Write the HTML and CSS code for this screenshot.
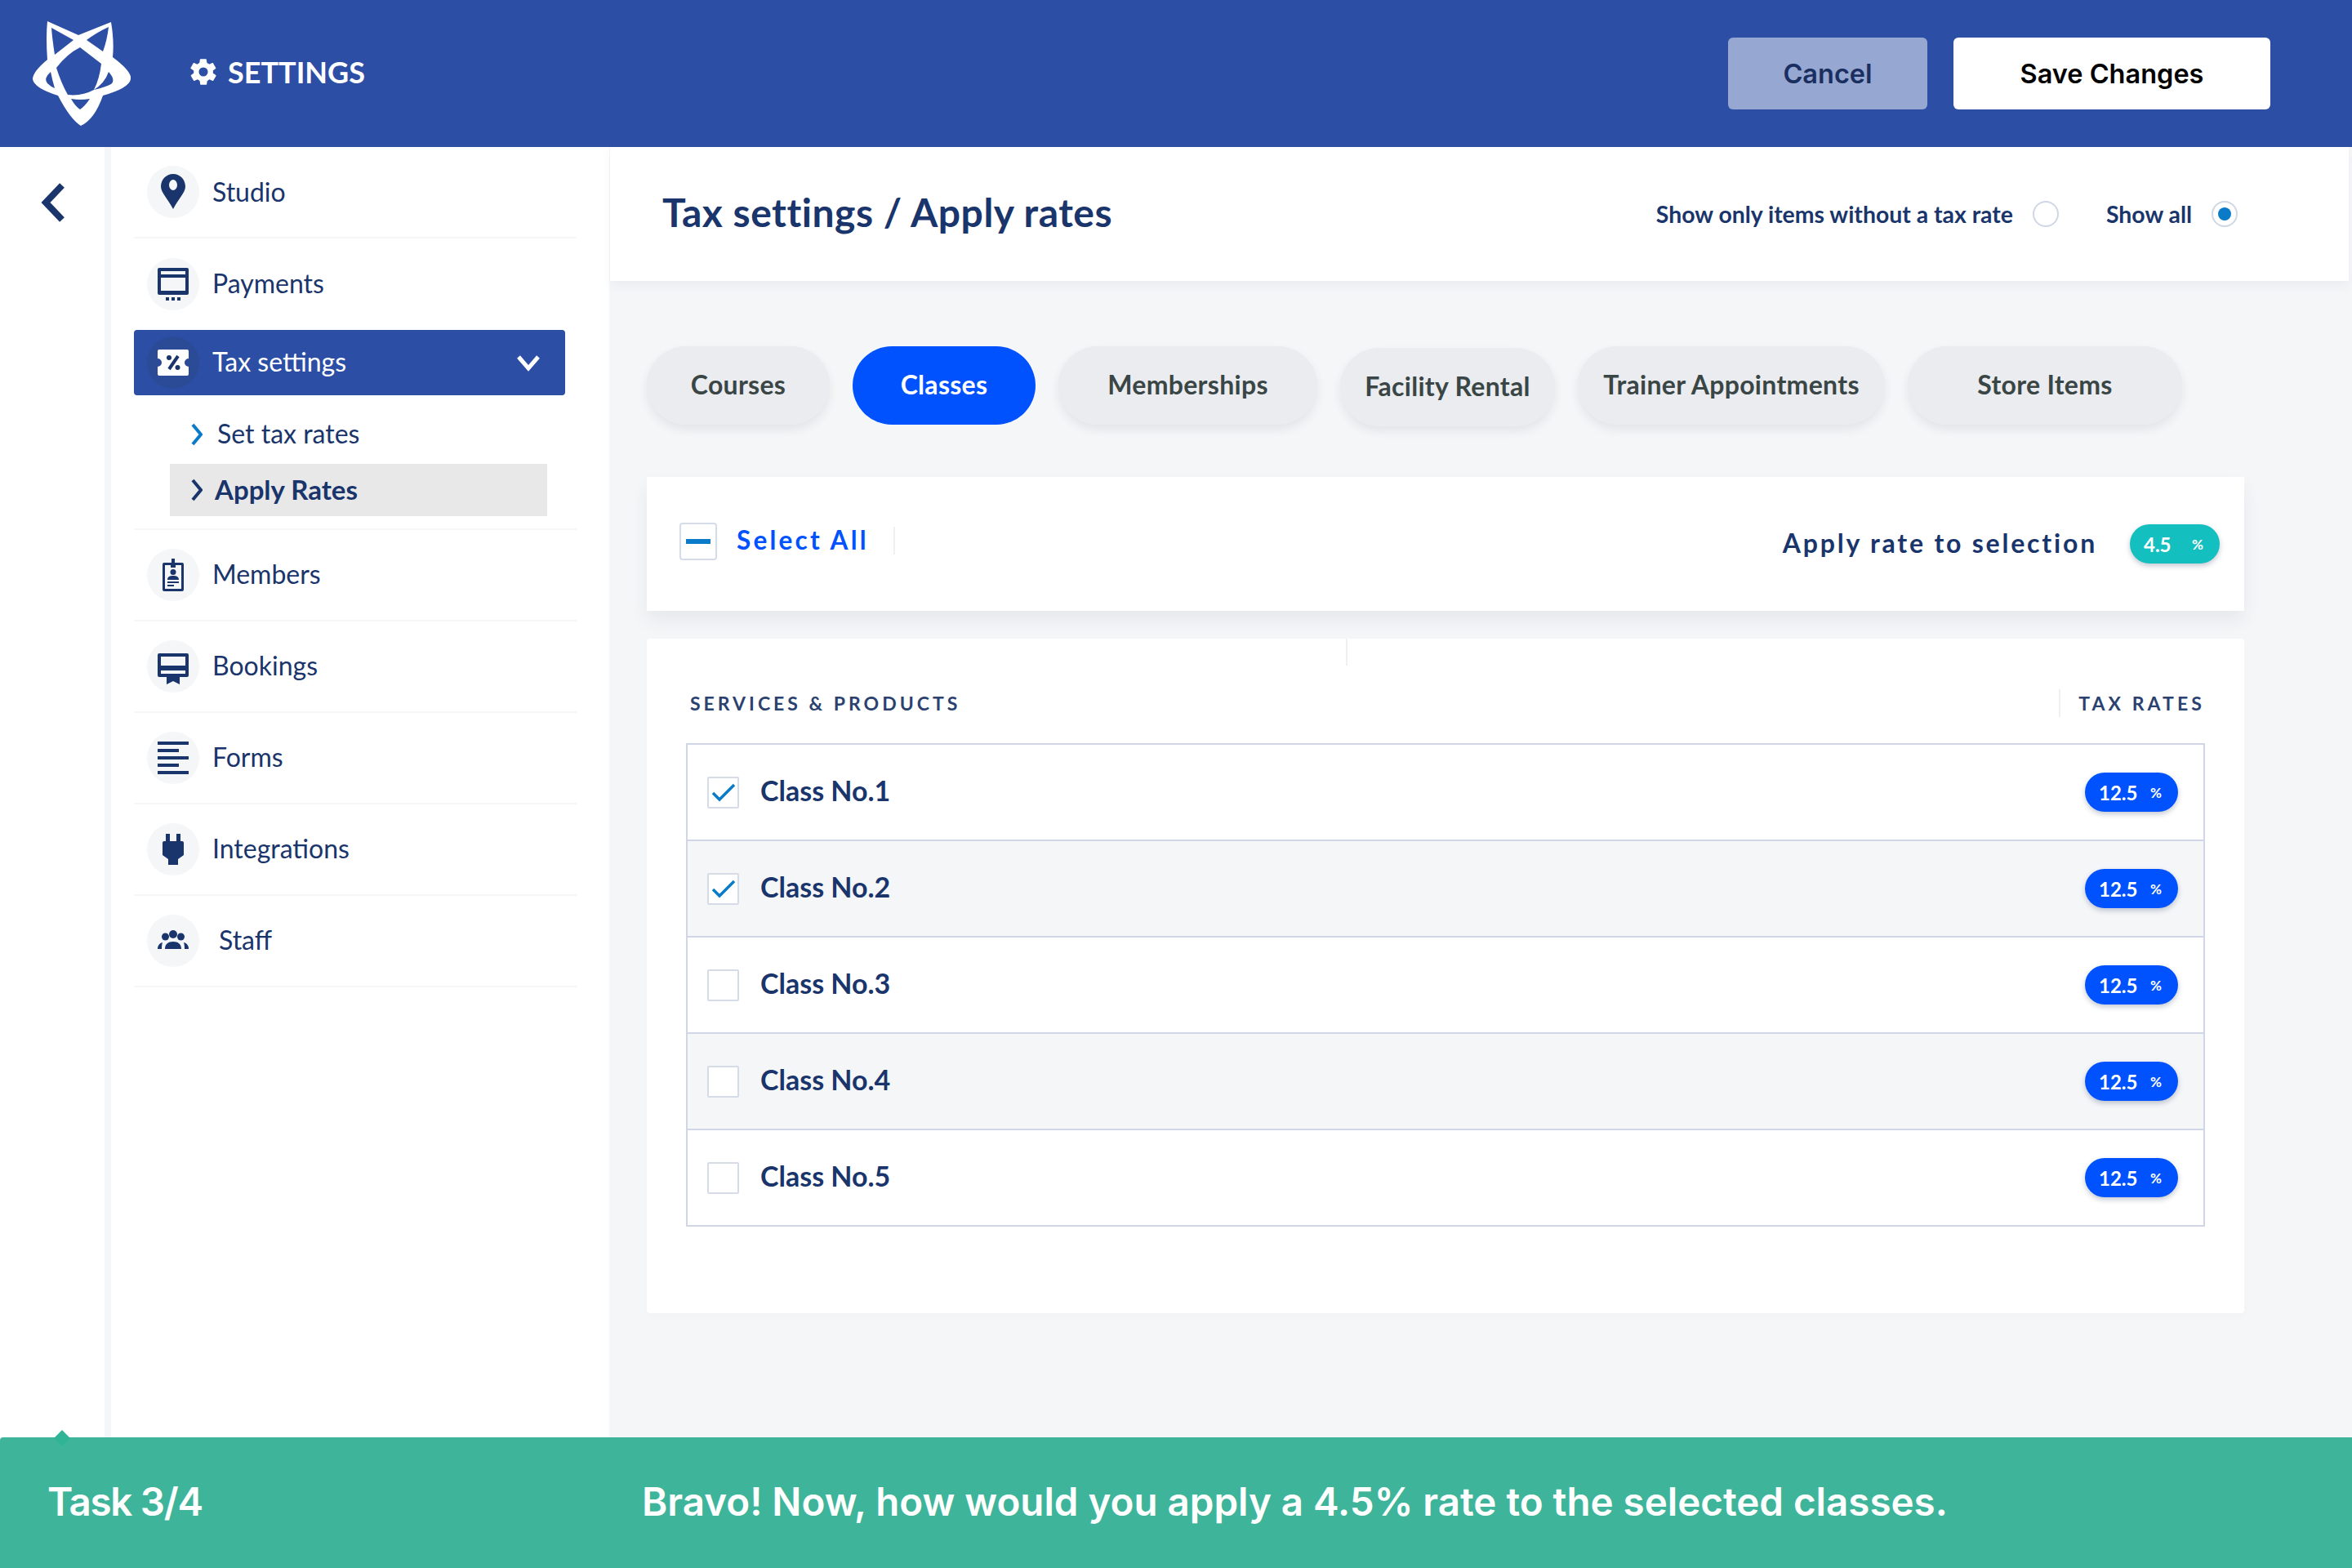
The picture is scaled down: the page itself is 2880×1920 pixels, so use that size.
FILE: index.html
```html
<!DOCTYPE html>
<html lang="en">
<head>
<meta charset="UTF-8" />
<title>Settings - Tax settings</title>
<link rel="stylesheet" href="styles.css">
</head>
<body>
<header class="topbar">
  <svg class="logo" viewBox="0 0 120 128" aria-hidden="true">
    <path class="logo-body" d="M18,0 L56,17 L96,1 Q100,25 98,44 Q122,62 120,71 Q118,82 86,91 Q76,120 59,128 Q46,120 31,91 Q2,82 0,71 Q0,62 18,47 Q16,20 18,0 Z"/>
    <path class="logo-cut" d="M23,8 L50,23 L27,41 Q24,22 23,8 Z"/>
    <path class="logo-cut" d="M93,7 Q91,24 86,37 L66,23 Q78,14 93,7 Z"/>
    <path class="logo-cut" d="M58,32 L84,52 Q82,70 75,84 Q60,92 43,90 Q35,76 29,57 Q42,40 58,32 Z"/>
    <path class="logo-cut" d="M22,62 Q13,70 18,76 Q22,80 27,82 Q24,72 22,62 Z"/>
    <path class="logo-cut" d="M93,62 Q102,72 96,77 Q88,81 75,84 Q88,76 93,62 Z"/>
    <path class="logo-cut" d="M47,95 Q58,97 70,95 Q64,104 58,108 Q52,104 47,95 Z"/>
  </svg>
  <div class="topbar-title">
    <svg class="gear" viewBox="0 0 24 24" aria-hidden="true"><path d="M19.4 13c.1-.3.1-.7.1-1s0-.7-.1-1l2.100-1.600c.2-.2.2-.4.1-.6l-2-3.500c-.1-.2-.4-.3-.6-.2l-2.500 1c-.5-.4-1.100-.7-1.700-1l-.4-2.700c0-.2-.2-.4-.5-.4h-4c-.2 0-.5.2-.5.4l-.4 2.700c-.6.2-1.200.6-1.700 1l-2.500-1c-.2-.1-.5 0-.6.2l-2 3.500c-.1.2-.1.5.1.6L4.600 11c0 .3-.1.7-.1 1s0 .7.1 1l-2.100 1.600c-.2.2-.2.4-.1.6l2 3.500c.1.2.4.3.6.2l2.500-1c.5.4 1.100.7 1.700 1l.4 2.700c0 .2.2.4.5.4h4c.2 0 .5-.2.5-.4l.4-2.700c.6-.2 1.200-.6 1.700-1l2.500 1c.2.1.5 0 .6-.2l2-3.500c.1-.2.1-.5-.1-.6L19.400 13zM12 15.500a3.500 3.500 0 1 1 0-7 3.500 3.500 0 0 1 0 7z"/></svg>
    <span>SETTINGS</span>
  </div>
  <div class="topbar-actions">
    <button class="btn btn-cancel">Cancel</button>
    <button class="btn btn-save">Save Changes</button>
  </div>
</header>

<div class="body-row">
  <aside class="rail">
    <svg class="rail-back" viewBox="0 0 30 48" aria-hidden="true"><path d="M26 3 L6 24 L26 45"/></svg>
  </aside>

  <nav class="sidebar">
    <a class="nav-item">
      <span class="nav-icon"><svg viewBox="0 0 40 40"><path fill-rule="evenodd" d="M20 -2C11.500 -2 5 5 5 13.500 5 21 14 29 20 41 26 29 35 21 35 13.500 35 5 28.500 -2 20 -2ZM20 5a5 6.500 0 1 1 0 13 5 6.500 0 0 1 0-13Z"/></svg></span>
      <span class="nav-label nav-label-first">Studio</span>
    </a>
    <a class="nav-item nav-plain">
      <span class="nav-icon"><svg viewBox="0 0 40 40"><path fill-rule="evenodd" d="M3 0H37a2 2 0 0 1 2 2V31a2 2 0 0 1-2 2H3a2 2 0 0 1-2-2V2A2 2 0 0 1 3 0ZM5 4V8H35V4ZM5 12V28H35V12Z"/><path d="M11 36h4v4h-4zM18 36h4v4h-4zM25 36h4v4h-4z"/></svg></span>
      <span class="nav-label">Payments</span>
    </a>

    <div class="nav-group">
      <a class="nav-active">
        <span class="nav-icon nav-icon-dark"><svg viewBox="0 0 40 40"><path class="tax-ticket" d="M3 4H37a2 2 0 0 1 2 2V15a5 5 0 0 0 0 10V34a2 2 0 0 1-2 2H3a2 2 0 0 1-2-2V25a5 5 0 0 0 0-10V6A2 2 0 0 1 3 4Z"/><path class="tax-mark" d="M26 12 L15 28"/><circle class="tax-dot" cx="15" cy="14" r="3"/><circle class="tax-dot" cx="25.500" cy="26" r="3"/></svg></span>
        <span class="nav-label">Tax settings</span>
        <svg class="nav-caret" viewBox="0 0 30 24" aria-hidden="true"><path d="M3 5 L15 19 L27 5"/></svg>
      </a>
      <a class="sub-item">
        <svg class="sub-arrow sub-arrow-blue" viewBox="0 0 14 28"><path d="M2 2 L12 14 L2 26"/></svg>
        <span>Set tax rates</span>
      </a>
      <a class="sub-item sub-active">
        <svg class="sub-arrow" viewBox="0 0 14 28"><path d="M2 2 L12 14 L2 26"/></svg>
        <span>Apply Rates</span>
      </a>
    </div>

    <a class="nav-item">
      <span class="nav-icon"><svg viewBox="0 0 40 40"><path fill-rule="evenodd" d="M18 0h4v5h9a2 2 0 0 1 2 2V38a2 2 0 0 1-2 2H9a2 2 0 0 1-2-2V7a2 2 0 0 1 2-2h9ZM10 8V37H30V8H23V11H17V8Z"/><circle cx="20" cy="16.500" r="3.500"/><path d="M13 26c0-4 3-5 7-5s7 1 7 5ZM13 28h14v2H13ZM13 32h8v2h-8Z"/></svg></span>
      <span class="nav-label">Members</span>
    </a>
    <a class="nav-item">
      <span class="nav-icon"><svg viewBox="0 0 40 40"><path fill-rule="evenodd" d="M3 4H37a2 2 0 0 1 2 2V31a2 2 0 0 1-2 2H28V42L20 38 12 42V33H3a2 2 0 0 1-2-2V6A2 2 0 0 1 3 4ZM5 8V19H35V8ZM5 25V29H35V25Z"/></svg></span>
      <span class="nav-label">Bookings</span>
    </a>
    <a class="nav-item">
      <span class="nav-icon"><svg viewBox="0 0 40 40"><path d="M1 0H39V4H1ZM1 9H27V13H1ZM1 18H39V22H1ZM1 27H27V31H1ZM1 36H39V40H1Z"/></svg></span>
      <span class="nav-label">Forms</span>
    </a>
    <a class="nav-item">
      <span class="nav-icon"><svg viewBox="0 0 40 40"><path d="M11 1h5v9h8V1h5v9h2a2 2 0 0 1 2 2v15l-7 5v7H14v-7l-7-5V12a2 2 0 0 1 2-2h2Z"/></svg></span>
      <span class="nav-label">Integrations</span>
    </a>
    <a class="nav-item">
      <span class="nav-icon"><svg viewBox="0 0 40 40"><circle cx="20" cy="12" r="5"/><circle cx="10.500" cy="15" r="4.500"/><circle cx="29.500" cy="15" r="4.500"/><path d="M10 30c0-6 4-9 10-9s10 3 10 9ZM1 30c0-4 2-7 6-8-.8 2.500-1 5-1 8ZM39 30c0-4-2-7-6-8 .8 2.500 1 5 1 8Z"/></svg></span>
      <span class="nav-label nav-label-staff">Staff</span>
    </a>
  </nav>

  <main class="content">
    <div class="page-head">
      <h1>Tax settings / Apply rates</h1>
      <div class="filters">
        <label class="filter">Show only items without a tax rate <span class="radio"></span></label>
        <label class="filter">Show all <span class="radio radio-on"></span></label>
      </div>
    </div>

    <div class="tabs">
      <div class="tab">Courses</div>
      <div class="tab tab-on">Classes</div>
      <div class="tab">Memberships</div>
      <div class="tab tab-low">Facility Rental</div>
      <div class="tab">Trainer Appointments</div>
      <div class="tab">Store Items</div>
    </div>

    <section class="select-bar">
      <span class="check check-big"><span class="dash"></span></span>
      <span class="select-all">Select All</span>
      <span class="vline"></span>
      <span class="apply-label">Apply rate to selection</span>
      <span class="pill pill-teal"><span>4.5</span><span class="pct">%</span></span>
    </section>

    <section class="rates-card">
      <div class="rates-head">
        <span class="head-name">SERVICES &amp; PRODUCTS</span>
        <span class="vline"></span>
        <span class="head-rates">TAX RATES</span>
      </div>
      <div class="rates-table">
        <div class="rate-row">
          <span class="check"><svg viewBox="0 0 30 24"><path d="M2 13 L10 21 L28 3"/></svg></span>
          <span class="rate-name">Class No.1</span>
          <span class="pill"><span>12.5</span><span class="pct">%</span></span>
        </div>
        <div class="rate-row">
          <span class="check"><svg viewBox="0 0 30 24"><path d="M2 13 L10 21 L28 3"/></svg></span>
          <span class="rate-name">Class No.2</span>
          <span class="pill"><span>12.5</span><span class="pct">%</span></span>
        </div>
        <div class="rate-row">
          <span class="check"></span>
          <span class="rate-name">Class No.3</span>
          <span class="pill"><span>12.5</span><span class="pct">%</span></span>
        </div>
        <div class="rate-row">
          <span class="check"></span>
          <span class="rate-name">Class No.4</span>
          <span class="pill"><span>12.5</span><span class="pct">%</span></span>
        </div>
        <div class="rate-row">
          <span class="check"></span>
          <span class="rate-name">Class No.5</span>
          <span class="pill"><span>12.5</span><span class="pct">%</span></span>
        </div>
      </div>
    </section>
  </main>
</div>

<footer class="task-bar">
  <span class="task-mark"></span>
  <span class="task-count">Task 3/4</span>
  <span class="task-text">Bravo! Now, how would you apply a 4.5% rate to the selected classes.</span>
</footer>
</body>
</html>
```
FILE: styles.css
```css
* {
  box-sizing: border-box;
}
body {
  margin: 0;
  height: 1920px;
  display: flex;
  flex-direction: column;
  font-family: Lato, 'Noto Sans', sans-serif;
  background-color: #f5f6f8;
  color: #19356b;
  overflow: hidden;
}

/* Top bar */
.topbar {
  height: 180px;
  flex: none;
  display: flex;
  align-items: center;
  background-color: #2c4ea5;
  padding-left: 40px;
  padding-right: 100px;
}
.logo {
  width: 120px;
  height: 128px;
}
.logo-body {
  fill: #fff;
}
.logo-cut {
  fill: #2c4ea5;
}
.topbar-title {
  display: flex;
  align-items: center;
  margin-left: 70px;
  color: #fff;
  font-weight: 700;
  font-size: 36px;
  margin-top: -4px;
}
.gear {
  width: 38px;
  height: 38px;
  fill: #fff;
  margin-right: 11px;
}
.topbar-actions {
  margin-left: auto;
  display: flex;
  gap: 32px;
}
.btn {
  height: 88px;
  border: none;
  border-radius: 6px;
  font-family: Inter, sans-serif;
  font-weight: 600;
  font-size: 32.500px;
}
.btn-cancel {
  width: 244px;
  background-color: #96a7d2;
  color: #1a2f5f;
}
.btn-save {
  width: 388px;
  background-color: #fff;
  color: #000;
}

/* Layout */
.body-row {
  flex: 1;
  display: flex;
  min-height: 0;
}
.rail {
  width: 136px;
  flex: none;
  background-color: #fff;
  border-right: 8px solid #f5f6f8;
  padding: 44px 0 0 50px;
}
.rail-back {
  display: block;
  width: 30px;
  height: 48px;
  fill: none;
  stroke: #19356b;
  stroke-width: 8;
}

/* Sidebar */
.sidebar {
  width: 610px;
  flex: none;
  background-color: #fff;
  padding-left: 28px;
}
.nav-item {
  height: 112px;
  margin-right: 40px;
  padding-left: 16px;
  display: flex;
  align-items: center;
  border-bottom: 2px solid #f5f6f8;
}
.nav-plain {
  border-bottom: none;
}
.nav-icon {
  width: 64px;
  height: 64px;
  flex: none;
  border-radius: 50%;
  background-color: #f5f6f8;
  display: flex;
  align-items: center;
  justify-content: center;
}
.nav-icon svg {
  width: 40px;
  height: 40px;
  fill: #19356b;
  overflow: visible;
}
.nav-icon-dark {
  background-color: #2b4b97;
}
.tax-ticket {
  fill: #fff;
}
.tax-mark {
  fill: none;
  stroke: #19356b;
  stroke-width: 4;
}
.tax-dot {
  fill: #19356b;
}
.nav-label {
  margin-left: 16px;
  margin-bottom: 3px;
  font-size: 32px;
  color: #19356b;
}
.nav-label-first {
  margin-bottom: 1px;
}
.nav-label-staff {
  margin-left: 24px;
}
.nav-group {
  height: 245px;
  margin-right: 40px;
  border-bottom: 2px solid #f5f6f8;
}
.nav-active {
  height: 80px;
  width: 528px;
  padding-left: 16px;
  display: flex;
  align-items: center;
  background-color: #2c4ea5;
  border-radius: 4px;
}
.nav-active .nav-label {
  color: #fff;
}
.nav-caret {
  margin-left: auto;
  margin-right: 30px;
  width: 30px;
  height: 24px;
  fill: none;
  stroke: #fff;
  stroke-width: 5;
}
.sub-item {
  display: flex;
  align-items: center;
  height: 64px;
  width: 462px;
  margin-left: 44px;
  padding-left: 26px;
  font-size: 32px;
  color: #19356b;
}
.sub-item span {
  margin-bottom: 3px;
}
.nav-active + .sub-item {
  margin-top: 16px;
  margin-bottom: 4px;
}
.sub-arrow {
  width: 14px;
  height: 28px;
  fill: none;
  stroke: #19356b;
  stroke-width: 4;
  margin-right: 15px;
}
.sub-arrow-blue {
  stroke: #0a7bc8;
  margin-right: 18px;
}
.sub-active {
  background-color: #e8e8e8;
  font-weight: 700;
  font-size: 33px;
}

/* Main */
.content {
  flex: 1;
  min-width: 0;
  padding-left: 1px;
}
.page-head {
  height: 164px;
  margin-right: 4px;
  padding: 0 136px 0 64px;
  display: flex;
  align-items: center;
  justify-content: space-between;
  background-color: #fff;
  box-shadow: 0 6px 12px rgba(40, 50, 70, 0.05);
}
.page-head h1 {
  margin: 0 0 5px;
  font-size: 48px;
  font-weight: 700;
  letter-spacing: .5px;
  color: #19356b;
}
.filters {
  display: flex;
  gap: 58px;
}
.filter {
  display: flex;
  align-items: center;
  gap: 24px;
  font-size: 28.400px;
  font-weight: 700;
}
.radio {
  width: 32px;
  height: 32px;
  flex: none;
  border-radius: 50%;
  border: 2px solid #cfd6e4;
  background-color: #fff;
  display: flex;
  align-items: center;
  justify-content: center;
}
.radio-on::after {
  content: "";
  width: 16px;
  height: 16px;
  border-radius: 50%;
  background-color: #0a7bc8;
}

.tabs {
  height: 96px;
  margin: 80px 0 0 45px;
  display: grid;
  grid-template-columns: 224px 224px 317px 263px 376px 336px;
  grid-template-rows: 96px;
  column-gap: 28px;
}
.tab {
  height: 96px;
  padding-bottom: 4px;
  border-radius: 48px;
  background-color: #eaecef;
  box-shadow: 0 6px 12px rgba(40, 50, 70, 0.09);
  display: flex;
  align-items: center;
  justify-content: center;
  font-size: 32px;
  font-weight: 700;
  letter-spacing: .3px;
  color: #3a4646;
}
.tab-on {
  background-color: #0052ff;
  color: #fff;
  box-shadow: none;
}
.tab-low {
  margin-top: 2px;
}

.select-bar {
  width: 1956px;
  height: 164px;
  margin: 64px 0 0 45px;
  padding: 0 30px 0 40px;
  display: flex;
  align-items: center;
  background-color: #fff;
  box-shadow: 0 12px 20px rgba(40, 50, 70, 0.07);
}
.check {
  width: 39px;
  height: 39px;
  flex: none;
  border: 2px solid #d6dbe8;
  border-radius: 2px;
  background-color: #fff;
  display: flex;
  align-items: center;
  justify-content: center;
}
.check svg {
  width: 30px;
  height: 24px;
  fill: none;
  stroke: #0a7bc8;
  stroke-width: 3.500;
}
.check-big {
  width: 46px;
  height: 46px;
  border-radius: 4px;
  margin-bottom: 6px;
}
.dash {
  width: 30px;
  height: 6px;
  background-color: #0a7bc8;
}
.select-all {
  margin-left: 24px;
  margin-bottom: 10px;
  font-size: 31.500px;
  font-weight: 700;
  letter-spacing: 3.200px;
  color: #0052ff;
}
.vline {
  width: 2px;
  height: 34px;
  flex: none;
  background-color: #eef0f4;
}
.select-bar .vline {
  margin-left: 30px;
  margin-bottom: 8px;
}
.apply-label {
  margin-left: auto;
  margin-bottom: 3px;
  font-size: 32px;
  font-weight: 700;
  letter-spacing: 2.800px;
}
.pill {
  width: 114px;
  height: 48px;
  flex: none;
  border-radius: 24px;
  background-color: #0052ff;
  box-shadow: 0 3px 6px rgba(20, 40, 80, 0.25);
  color: #fff;
  padding: 0 20px 0 17px;
  display: flex;
  align-items: center;
  justify-content: space-between;
  font-size: 24px;
  font-weight: 700;
}
.pct {
  font-size: 17px;
}
.pill-teal {
  width: 110px;
  margin-left: 40px;
  background-color: #14bfbf;
}

.rates-card {
  position: relative;
  width: 1956px;
  height: 826px;
  margin: 34px 0 0 45px;
  padding: 0 48px;
  background-color: #fff;
  border-radius: 4px;
  box-shadow: 0 4px 10px rgba(40, 50, 70, 0.02);
}
.rates-card::before {
  content: "";
  position: absolute;
  left: 856px;
  top: 0;
  width: 2px;
  height: 33px;
  background-color: #eef0f4;
}
.rates-head {
  height: 128px;
  padding: 30px 0 0 5px;
  display: flex;
  align-items: center;
  font-size: 23px;
  font-weight: 700;
  color: #2b4270;
}
.head-name {
  letter-spacing: 4px;
  margin-right: auto;
}
.head-rates {
  margin-left: 22px;
  letter-spacing: 4.100px;
}
.rates-table {
  width: 1860px;
  border: 2px solid #d0d6e6;
  border-bottom: none;
}
.rate-row {
  height: 118px;
  padding: 0 31px 0 24px;
  display: flex;
  align-items: center;
  background-color: #fff;
  border-bottom: 2px solid #d0d6e6;
}
.rate-row:nth-child(even) {
  background-color: #f5f6f8;
}
.rate-name {
  margin-left: 26px;
  margin-right: auto;
  margin-bottom: 6px;
  font-size: 34px;
  font-weight: 700;
}

/* Task banner */
.task-bar {
  position: relative;
  height: 160px;
  flex: none;
  display: flex;
  align-items: center;
  background-color: #3eb59a;
  border-top-left-radius: 4px;
  color: #fff;
  font-family: Inter, sans-serif;
  font-weight: 600;
  font-size: 47.500px;
}
.task-mark {
  position: absolute;
  left: 69px;
  top: -6px;
  width: 14px;
  height: 14px;
  background-color: #2fb596;
  transform: rotate(45deg);
}
.task-count {
  width: 786px;
  padding-left: 58px;
  margin-bottom: 3px;
  letter-spacing: -1.300px;
}
.task-text {
  margin-bottom: 3px;
}
```
